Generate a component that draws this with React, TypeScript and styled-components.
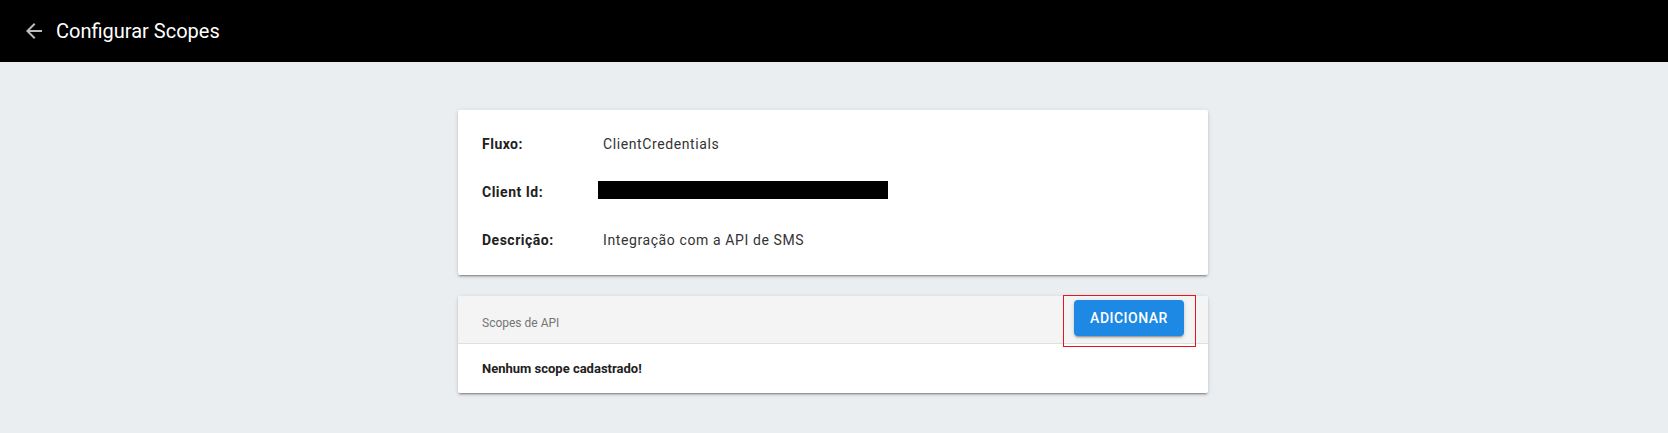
import styled, { createGlobalStyle } from 'styled-components';

const GlobalStyle = createGlobalStyle`
  html, body {
    margin: 0;
    padding: 0;
    background: #eaeef1;
    font-family: Roboto, "Liberation Sans", Arial, sans-serif;
  }
  * {
    box-sizing: border-box;
  }
`;

const details = [
  { label: 'Fluxo:', value: 'ClientCredentials' },
  { label: 'Client Id:', value: null },
  { label: 'Descrição:', value: 'Integração com a API de SMS' },
];

const BackArrow = () => (
  <svg width="24" height="24" viewBox="0 0 24 24" fill="currentColor">
    <path d="M20 11H7.83l5.59-5.59L12 4l-8 8 8 8 1.41-1.41L7.83 13H20v-2z" />
  </svg>
);

const App = () => {
  return (
    <>
      <GlobalStyle />
      <Page>
        <TopBar>
          <BackButton>
            <BackArrow />
          </BackButton>
          <PageTitle>Configurar Scopes</PageTitle>
        </TopBar>
        <Main>
          <Column>
            <InfoCard>
              {details.map((d) => (
                <InfoRow key={d.label}>
                  <Label>{d.label}</Label>
                  {d.value ? <Value>{d.value}</Value> : <Redacted />}
                </InfoRow>
              ))}
            </InfoCard>
            <ScopesCard>
              <ScopesHeader>
                <ScopesTitle>Scopes de API</ScopesTitle>
                <ButtonSlot>
                  <AddButton>Adicionar</AddButton>
                  <Highlight />
                </ButtonSlot>
              </ScopesHeader>
              <ScopesBody>Nenhum scope cadastrado!</ScopesBody>
            </ScopesCard>
          </Column>
        </Main>
      </Page>
    </>
  );
};

const Page = styled.div`
  min-height: 100vh;
  background: #eaeef1;
`;

const TopBar = styled.header`
  height: 62px;
  background: #000;
  display: flex;
  align-items: center;
  padding: 0 0 0 22px;
  gap: 10px;
`;

const BackButton = styled.button`
  width: 24px;
  height: 24px;
  padding: 0;
  border: 0;
  background: none;
  color: #bdbdbd;
  display: flex;
  cursor: pointer;
`;

const PageTitle = styled.h1`
  margin: 0;
  font-size: 20px;
  font-weight: 400;
  color: #fff;
  line-height: 24px;
`;

const Main = styled.main`
  display: flex;
  justify-content: center;
  padding: 48px 2px 40px 0;
`;

const Column = styled.div`
  width: 750px;
  display: flex;
  flex-direction: column;
  gap: 21px;
`;

const Card = styled.section`
  background: #fff;
  border-radius: 2px;
  box-shadow: 0 2px 2px 0 rgba(0, 0, 0, 0.14), 0 3px 1px -2px rgba(0, 0, 0, 0.2),
    0 1px 5px 0 rgba(0, 0, 0, 0.12);
`;

const InfoCard = styled(Card)`
  padding: 10px 24px 11px;
`;

const InfoRow = styled.div`
  height: 48px;
  display: flex;
  align-items: center;
`;

const Label = styled.span`
  width: 121px;
  flex-shrink: 0;
  font-size: 14px;
  font-weight: 700;
  letter-spacing: 0.5px;
  color: #212121;
`;

const Value = styled.span`
  font-size: 14px;
  color: #333;
  letter-spacing: 0.6px;
`;

const Redacted = styled.span`
  display: block;
  width: 290px;
  height: 18px;
  margin: 0 0 4px -5px;
  background: #000;
`;

const ScopesCard = styled(Card)`
  overflow: visible;
`;

const ScopesHeader = styled.div`
  height: 48px;
  display: flex;
  align-items: center;
  justify-content: space-between;
  padding: 0 24px 0 24px;
  background: #f4f4f4;
  border-bottom: 1px solid #e0e0e0;
  border-radius: 2px 2px 0 0;
`;

const ScopesTitle = styled.span`
  font-size: 12px;
  color: #757575;
  margin-top: 6px;
`;

const ButtonSlot = styled.div`
  position: relative;
  margin-top: -4px;
`;

const AddButton = styled.button`
  height: 36px;
  min-width: 110px;
  padding: 0 16px;
  border: 0;
  border-radius: 4px;
  background: #1e88e5;
  color: #fff;
  font-family: Roboto, "Liberation Sans", Arial, sans-serif;
  font-size: 14px;
  font-weight: 500;
  letter-spacing: 0.5px;
  text-transform: uppercase;
  box-shadow: 0 2px 2px 0 rgba(0, 0, 0, 0.14), 0 3px 1px -2px rgba(0, 0, 0, 0.2),
    0 1px 5px 0 rgba(0, 0, 0, 0.12);
  cursor: pointer;
  display: block;
`;

const Highlight = styled.div`
  position: absolute;
  top: -5px;
  left: -11px;
  right: -12px;
  bottom: -11px;
  border: 1px solid #e3161f;
  pointer-events: none;
`;

const ScopesBody = styled.div`
  height: 49px;
  display: flex;
  align-items: center;
  padding: 0 24px;
  font-size: 13px;
  font-weight: 700;
  color: #212121;
`;

export default App;
